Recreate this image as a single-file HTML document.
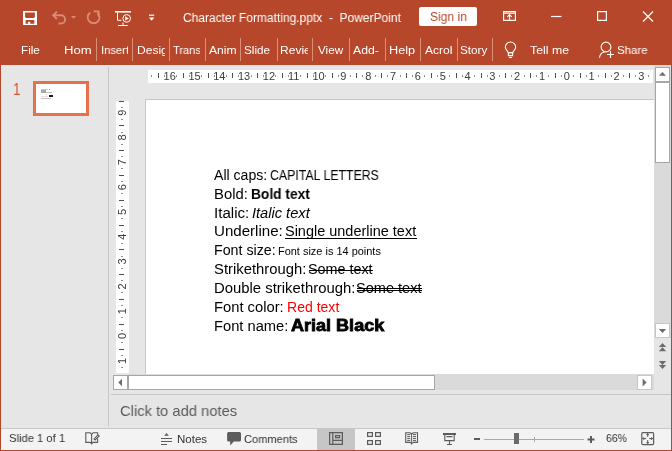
<!DOCTYPE html>
<html><head><meta charset="utf-8">
<style>
*{margin:0;padding:0;box-sizing:border-box}
html,body{width:672px;height:451px;overflow:hidden}
body{background:#b7472a;position:relative;font-family:"Liberation Sans",sans-serif}
.a{position:absolute}
.st{position:absolute;white-space:nowrap;line-height:1;transform-origin:0 0;will-change:transform}
.t{position:absolute;white-space:nowrap;line-height:1;transform-origin:0 0;will-change:transform}
svg{position:absolute;overflow:visible}
.clip{position:absolute;top:0;height:65px;overflow:hidden}
.sep{position:absolute;top:38px;width:1px;height:23px;background:#d98e79}
</style></head><body>

<!-- title bar -->
<svg style="left:0;top:0" width="672" height="35">
  <!-- save -->
  <path fill="#fff" fill-rule="evenodd" d="M23 11H37V25H23ZM25.1 12.4H34.9V17.1L33.9 18.1H26.1L25.1 17.1ZM25.6 20.1H34.4V23.7H30.2V21.7H28.1V23.7H25.6Z"/>
  <!-- undo (faded) -->
  <g fill="none" stroke="#d98b76" stroke-width="1.9">
    <path d="M53.2 15.3H61A4.1 4.1 0 0 1 61 23.5H58.5"/>
    <path d="M56.9 11.6L53.2 15.3L56.9 19"/>
    <path d="M90.2 12.6A5.9 5.9 0 1 0 97.4 12.9"/>
    <path d="M93.6 11.4H98.6V16.2"/>
  </g>
  <path d="M71 16H76.3L73.65 18.8Z" fill="#d98b76"/>
  <!-- present -->
  <g fill="none" stroke="#fff" stroke-width="1">
    <path d="M115 11.8H131" stroke-width="1.6"/>
    <path d="M117.5 12.5V20.3H121.5"/>
    <circle cx="126.7" cy="18.4" r="3.8"/>
    <path d="M118 25.5H127.8M123 22.5V25.5"/>
  </g>
  <path d="M125.2 16.2V20.6L128.9 18.4Z" fill="#fff"/>
  <!-- customize -->
  <rect x="149" y="14.6" width="5.2" height="1.2" fill="#fff"/>
  <path d="M149 17.5H154.3L151.65 20.8Z" fill="#fff"/>
  <!-- ribbon display options -->
  <g fill="none" stroke="#fff" stroke-width="1.2">
    <path d="M503.6 11.6H515.4V20.4H503.6Z"/>
    <path d="M504 13.2H515"/>
    <path d="M509.5 14.5V20.4M507.3 16.8L509.5 14.6L511.7 16.8"/>
    <!-- minimize -->
    <path d="M551 16.5H561.5"/>
    <!-- maximize -->
    <path d="M597.6 11.6H606.4V20.4H597.6Z"/>
    <!-- close -->
    <path d="M643 11.5L653 21.5M653 11.5L643 21.5"/>
  </g>
</svg>
<div class="t" style="left:183.1px;top:12.4px;font-size:12.5px;transform:scaleX(0.959);color:#fff">Character Formatting.pptx&nbsp; -&nbsp; PowerPoint</div>
<div class="a" style="left:419px;top:7px;width:58px;height:19px;background:#fff;border-radius:2px"></div>
<div class="t" style="left:429.6px;top:11.1px;font-size:12.5px;transform:scaleX(0.966);color:#b7472a">Sign in</div>

<!-- ribbon tabs -->
<div class="t" style="left:20.60px;top:43.85px;font-size:11.7px;transform:scaleX(1.0);color:#fff">File</div>
<div class="clip" style="left:64px;width:28px"><div class="t" style="left:0.40px;top:43.85px;font-size:11.7px;transform:scaleX(1.12);color:#fff">Home</div></div>
<div class="sep" style="left:96px"></div>
<div class="clip" style="left:101px;width:27px"><div class="t" style="left:0.10px;top:43.85px;font-size:11.7px;transform:scaleX(0.96);color:#fff">Insert</div></div>
<div class="sep" style="left:132px"></div>
<div class="clip" style="left:136px;width:29px"><div class="t" style="left:0.60px;top:43.85px;font-size:11.7px;transform:scaleX(1.03);color:#fff">Design</div></div>
<div class="sep" style="left:169px"></div>
<div class="clip" style="left:172px;width:28px"><div class="t" style="left:0.80px;top:43.85px;font-size:11.7px;transform:scaleX(0.95);color:#fff">Transitions</div></div>
<div class="sep" style="left:205px"></div>
<div class="clip" style="left:208px;width:28px"><div class="t" style="left:1.00px;top:43.85px;font-size:11.7px;transform:scaleX(1.04);color:#fff">Animations</div></div>
<div class="sep" style="left:240px"></div>
<div class="clip" style="left:244px;width:28px"><div class="t" style="left:0.00px;top:43.85px;font-size:11.7px;transform:scaleX(1.0);color:#fff">Slide Show</div></div>
<div class="sep" style="left:277px"></div>
<div class="clip" style="left:280px;width:28px"><div class="t" style="left:0.40px;top:43.85px;font-size:11.7px;transform:scaleX(1.03);color:#fff">Review</div></div>
<div class="sep" style="left:312px"></div>
<div class="clip" style="left:316px;width:28px"><div class="t" style="left:1.50px;top:43.85px;font-size:11.7px;transform:scaleX(1.0);color:#fff">View</div></div>
<div class="sep" style="left:349px"></div>
<div class="clip" style="left:352px;width:27px"><div class="t" style="left:1.20px;top:43.85px;font-size:11.7px;transform:scaleX(1.047);color:#fff">Add-ins</div></div>
<div class="sep" style="left:385px"></div>
<div class="clip" style="left:389px;width:27px"><div class="t" style="left:0.00px;top:43.85px;font-size:11.7px;transform:scaleX(1.09);color:#fff">Help</div></div>
<div class="sep" style="left:420px"></div>
<div class="clip" style="left:424px;width:28px"><div class="t" style="left:1.20px;top:43.85px;font-size:11.7px;transform:scaleX(1.03);color:#fff">Acrobat</div></div>
<div class="sep" style="left:457px"></div>
<div class="clip" style="left:460px;width:28px"><div class="t" style="left:0.00px;top:43.85px;font-size:11.7px;transform:scaleX(0.99);color:#fff">Storyline</div></div>
<div class="sep" style="left:492px"></div>
<div class="t" style="left:530.24px;top:44.10px;font-size:11.7px;transform:scaleX(1.054);color:#fff">Tell me</div>
<div class="t" style="left:616.91px;top:44.10px;font-size:11.7px;transform:scaleX(0.98);color:#fff">Share</div>
<svg style="left:0;top:35px" width="672" height="30">
  <g fill="none" stroke="#fff" stroke-width="1.1">
    <path d="M508.3 17.8C508 16.2 505.3 14.4 505.3 12.2A5.2 5.2 0 0 1 515.7 12.2C515.7 14.4 513 16.2 512.7 17.8Z"/>
    <path d="M508.4 17.8H512.6V20.6H508.4Z"/>
    <path d="M509 22.5H512"/>
    <circle cx="606" cy="12" r="4.9"/>
    <path d="M599.5 22.8C599.8 19.5 601.8 17.5 604.5 17"/>
    <path d="M607 19.5H614M610.5 16V23"/>
  </g>
</svg>

<!-- main area -->
<div class="a" style="left:1px;top:65px;width:670px;height:363px;background:#e6e6e6"></div>
<div class="a" style="left:108px;top:67px;width:1px;height:359px;background:#c6c6c6"></div>

<!-- thumbnail -->
<div class="t" style="left:13.2px;top:81.6px;font-size:16px;transform:scaleX(0.84);color:#cf5534">1</div>
<div class="a" style="left:33px;top:81px;width:56px;height:35px;border:3px solid #e9704c;background:#fff"></div>

<!-- rulers -->
<div class="a" style="left:148px;top:70px;width:505px;height:13px;background:#fff"></div>
<div class="a" style="left:116px;top:101px;width:13px;height:272px;background:#fff"></div>

<!-- ruler marks -->
<svg style="left:0;top:0;will-change:transform" width="672" height="451" shape-rendering="crispEdges">
<g font-family="Liberation Sans" font-size="11px" fill="#3c3c3c" shape-rendering="auto"><text x="169.68" y="79.8" text-anchor="middle">16</text><text x="194.50" y="79.8" text-anchor="middle">15</text><text x="219.32" y="79.8" text-anchor="middle">14</text><text x="244.14" y="79.8" text-anchor="middle">13</text><text x="268.96" y="79.8" text-anchor="middle">12</text><text x="293.78" y="79.8" text-anchor="middle">11</text><text x="318.60" y="79.8" text-anchor="middle">10</text><text x="343.42" y="79.8" text-anchor="middle">9</text><text x="368.24" y="79.8" text-anchor="middle">8</text><text x="393.06" y="79.8" text-anchor="middle">7</text><text x="417.88" y="79.8" text-anchor="middle">6</text><text x="442.70" y="79.8" text-anchor="middle">5</text><text x="467.52" y="79.8" text-anchor="middle">4</text><text x="492.34" y="79.8" text-anchor="middle">3</text><text x="517.16" y="79.8" text-anchor="middle">2</text><text x="541.98" y="79.8" text-anchor="middle">1</text><text x="566.80" y="79.8" text-anchor="middle">0</text><text x="591.62" y="79.8" text-anchor="middle">1</text><text x="616.44" y="79.8" text-anchor="middle">2</text><text x="641.26" y="79.8" text-anchor="middle">3</text></g>
<rect x="151" y="75" width="1" height="2" fill="#909090"/><rect x="158" y="73" width="1" height="5" fill="#505050"/><rect x="164" y="75" width="1" height="2" fill="#909090"/><rect x="176" y="75" width="1" height="2" fill="#909090"/><rect x="183" y="73" width="1" height="5" fill="#505050"/><rect x="189" y="75" width="1" height="2" fill="#909090"/><rect x="201" y="75" width="1" height="2" fill="#909090"/><rect x="208" y="73" width="1" height="5" fill="#505050"/><rect x="214" y="75" width="1" height="2" fill="#909090"/><rect x="226" y="75" width="1" height="2" fill="#909090"/><rect x="232" y="73" width="1" height="5" fill="#505050"/><rect x="238" y="75" width="1" height="2" fill="#909090"/><rect x="251" y="75" width="1" height="2" fill="#909090"/><rect x="257" y="73" width="1" height="5" fill="#505050"/><rect x="263" y="75" width="1" height="2" fill="#909090"/><rect x="275" y="75" width="1" height="2" fill="#909090"/><rect x="282" y="73" width="1" height="5" fill="#505050"/><rect x="288" y="75" width="1" height="2" fill="#909090"/><rect x="300" y="75" width="1" height="2" fill="#909090"/><rect x="307" y="73" width="1" height="5" fill="#505050"/><rect x="313" y="75" width="1" height="2" fill="#909090"/><rect x="325" y="75" width="1" height="2" fill="#909090"/><rect x="332" y="73" width="1" height="5" fill="#505050"/><rect x="338" y="75" width="1" height="2" fill="#909090"/><rect x="350" y="75" width="1" height="2" fill="#909090"/><rect x="356" y="73" width="1" height="5" fill="#505050"/><rect x="362" y="75" width="1" height="2" fill="#909090"/><rect x="375" y="75" width="1" height="2" fill="#909090"/><rect x="381" y="73" width="1" height="5" fill="#505050"/><rect x="387" y="75" width="1" height="2" fill="#909090"/><rect x="400" y="75" width="1" height="2" fill="#909090"/><rect x="406" y="73" width="1" height="5" fill="#505050"/><rect x="412" y="75" width="1" height="2" fill="#909090"/><rect x="424" y="75" width="1" height="2" fill="#909090"/><rect x="431" y="73" width="1" height="5" fill="#505050"/><rect x="437" y="75" width="1" height="2" fill="#909090"/><rect x="449" y="75" width="1" height="2" fill="#909090"/><rect x="456" y="73" width="1" height="5" fill="#505050"/><rect x="462" y="75" width="1" height="2" fill="#909090"/><rect x="474" y="75" width="1" height="2" fill="#909090"/><rect x="481" y="73" width="1" height="5" fill="#505050"/><rect x="487" y="75" width="1" height="2" fill="#909090"/><rect x="499" y="75" width="1" height="2" fill="#909090"/><rect x="505" y="73" width="1" height="5" fill="#505050"/><rect x="511" y="75" width="1" height="2" fill="#909090"/><rect x="524" y="75" width="1" height="2" fill="#909090"/><rect x="530" y="73" width="1" height="5" fill="#505050"/><rect x="536" y="75" width="1" height="2" fill="#909090"/><rect x="548" y="75" width="1" height="2" fill="#909090"/><rect x="555" y="73" width="1" height="5" fill="#505050"/><rect x="561" y="75" width="1" height="2" fill="#909090"/><rect x="573" y="75" width="1" height="2" fill="#909090"/><rect x="580" y="73" width="1" height="5" fill="#505050"/><rect x="586" y="75" width="1" height="2" fill="#909090"/><rect x="598" y="75" width="1" height="2" fill="#909090"/><rect x="605" y="73" width="1" height="5" fill="#505050"/><rect x="611" y="75" width="1" height="2" fill="#909090"/><rect x="623" y="75" width="1" height="2" fill="#909090"/><rect x="629" y="73" width="1" height="5" fill="#505050"/><rect x="635" y="75" width="1" height="2" fill="#909090"/><rect x="648" y="75" width="1" height="2" fill="#909090"/>
<g font-family="Liberation Sans" font-size="11px" fill="#3c3c3c" shape-rendering="auto"><text transform="translate(126,112.62) rotate(-90)" x="0" y="0" text-anchor="middle">9</text><text transform="translate(126,137.44) rotate(-90)" x="0" y="0" text-anchor="middle">8</text><text transform="translate(126,162.26) rotate(-90)" x="0" y="0" text-anchor="middle">7</text><text transform="translate(126,187.08) rotate(-90)" x="0" y="0" text-anchor="middle">6</text><text transform="translate(126,211.90) rotate(-90)" x="0" y="0" text-anchor="middle">5</text><text transform="translate(126,236.72) rotate(-90)" x="0" y="0" text-anchor="middle">4</text><text transform="translate(126,261.54) rotate(-90)" x="0" y="0" text-anchor="middle">3</text><text transform="translate(126,286.36) rotate(-90)" x="0" y="0" text-anchor="middle">2</text><text transform="translate(126,311.18) rotate(-90)" x="0" y="0" text-anchor="middle">1</text><text transform="translate(126,336.00) rotate(-90)" x="0" y="0" text-anchor="middle">0</text><text transform="translate(126,360.82) rotate(-90)" x="0" y="0" text-anchor="middle">1</text></g>
<rect x="119" y="101" width="5" height="1" fill="#505050"/><rect x="121" y="101" width="2" height="1" fill="#909090"/><rect x="121" y="101" width="2" height="1" fill="#909090"/><rect x="119" y="101" width="5" height="1" fill="#505050"/><rect x="121" y="107" width="2" height="1" fill="#909090"/><rect x="121" y="119" width="2" height="1" fill="#909090"/><rect x="119" y="125" width="5" height="1" fill="#505050"/><rect x="121" y="132" width="2" height="1" fill="#909090"/><rect x="121" y="144" width="2" height="1" fill="#909090"/><rect x="119" y="150" width="5" height="1" fill="#505050"/><rect x="121" y="156" width="2" height="1" fill="#909090"/><rect x="121" y="168" width="2" height="1" fill="#909090"/><rect x="119" y="175" width="5" height="1" fill="#505050"/><rect x="121" y="181" width="2" height="1" fill="#909090"/><rect x="121" y="193" width="2" height="1" fill="#909090"/><rect x="119" y="200" width="5" height="1" fill="#505050"/><rect x="121" y="206" width="2" height="1" fill="#909090"/><rect x="121" y="218" width="2" height="1" fill="#909090"/><rect x="119" y="225" width="5" height="1" fill="#505050"/><rect x="121" y="231" width="2" height="1" fill="#909090"/><rect x="121" y="243" width="2" height="1" fill="#909090"/><rect x="119" y="249" width="5" height="1" fill="#505050"/><rect x="121" y="256" width="2" height="1" fill="#909090"/><rect x="121" y="268" width="2" height="1" fill="#909090"/><rect x="119" y="274" width="5" height="1" fill="#505050"/><rect x="121" y="280" width="2" height="1" fill="#909090"/><rect x="121" y="292" width="2" height="1" fill="#909090"/><rect x="119" y="299" width="5" height="1" fill="#505050"/><rect x="121" y="305" width="2" height="1" fill="#909090"/><rect x="121" y="317" width="2" height="1" fill="#909090"/><rect x="119" y="324" width="5" height="1" fill="#505050"/><rect x="121" y="330" width="2" height="1" fill="#909090"/><rect x="121" y="342" width="2" height="1" fill="#909090"/><rect x="119" y="349" width="5" height="1" fill="#505050"/><rect x="121" y="355" width="2" height="1" fill="#909090"/><rect x="121" y="367" width="2" height="1" fill="#909090"/>
</svg>
<!-- slide -->
<div class="a" style="left:145px;top:99px;width:509px;height:275px;background:#fff;border-left:1px solid #c6c6c6;border-top:1px solid #c6c6c6"></div>

<!-- slide text -->
<div class="st" style="left:214.30px;top:167.85px;transform:scaleX(1.006);font-size:14.0px;color:#000">All caps:</div>
<div class="st" style="left:270.12px;top:167.85px;transform:scaleX(0.880);font-size:14.0px;color:#000">CAPITAL LETTERS</div>
<div class="st" style="left:213.55px;top:186.75px;transform:scaleX(1.06);font-size:14.0px;color:#000">Bold:</div>
<div class="st" style="left:250.62px;top:186.75px;transform:scaleX(0.9821);font-size:14.0px;font-weight:bold;color:#000">Bold text</div>
<div class="st" style="left:213.53px;top:205.75px;transform:scaleX(1.079);font-size:14.0px;color:#000">Italic:</div>
<div class="st" style="left:252.48px;top:205.75px;transform:scaleX(1.0443);font-size:14.0px;font-style:italic;color:#000">Italic text</div>
<div class="st" style="left:213.55px;top:224.35px;transform:scaleX(1.078);font-size:14.0px;color:#000">Underline:</div>
<div class="st" style="left:284.92px;top:224.35px;transform:scaleX(1.0341);font-size:14.0px;color:#000">Single underline text</div>
<div class="st" style="left:213.63px;top:242.95px;transform:scaleX(1.0163);font-size:14.0px;color:#000">Font size:</div>
<div class="st" style="left:277.74px;top:245.57px;transform:scaleX(1.0054);font-size:10.9px;color:#000">Font size is 14 points</div>
<div class="st" style="left:213.58px;top:262.05px;transform:scaleX(1.0588);font-size:14.0px;color:#000">Strikethrough:</div>
<div class="st" style="left:308.33px;top:262.05px;transform:scaleX(1.0249);font-size:14.0px;color:#000">Some text</div>
<div class="st" style="left:213.57px;top:280.85px;transform:scaleX(1.0621);font-size:14.0px;color:#000">Double strikethrough:</div>
<div class="st" style="left:356.22px;top:280.85px;transform:scaleX(1.0394);font-size:14.0px;color:#000">Some text</div>
<div class="st" style="left:213.58px;top:299.75px;transform:scaleX(1.0535);font-size:14.0px;color:#000">Font color:</div>
<div class="st" style="left:287.0px;top:299.75px;transform:scaleX(1.0030);font-size:14.0px;color:#f00">Red text</div>
<div class="st" style="left:213.59px;top:318.55px;transform:scaleX(1.0505);font-size:14.0px;color:#000">Font name:</div>
<div class="st" style="left:291.30px;top:318.0px;transform:scaleX(1.1415);font-size:15.8px;font-weight:bold;-webkit-text-stroke:0.8px #000;color:#000">Arial Black</div>
<div class="a" style="left:285px;top:238px;width:132px;height:1px;background:#000"></div>
<div class="a" style="left:309px;top:270px;width:64px;height:1px;background:#000"></div>
<div class="a" style="left:357px;top:288px;width:65px;height:1px;background:#000"></div>
<div class="a" style="left:357px;top:290px;width:65px;height:1px;background:#000"></div>

<!-- v scrollbar -->
<div class="a" style="left:654px;top:65px;width:17px;height:273px;background:#dadada"></div>
<div class="a" style="left:655px;top:67px;width:15px;height:15px;background:#fff;border:1px solid #a6a6a6"></div>
<div class="a" style="left:655px;top:82px;width:15px;height:81px;background:#fff;border:1px solid #a6a6a6"></div>
<div class="a" style="left:655px;top:323px;width:15px;height:15px;background:#fff;border:1px solid #c6c6c6"></div>
<svg style="left:0;top:0" width="672" height="451">
  <path d="M659 75.7H666L662.5 71.9Z" fill="#6d6d6d"/>
  <path d="M658.8 329H666.2L662.5 333Z" fill="#6d6d6d"/>
  <path d="M658.8 347H666.2L662.5 343Z M658.8 351.2H666.2L662.5 347.2Z" fill="#6d6d6d"/>
  <path d="M658.8 361H666.2L662.5 365Z M658.8 365H666.2L662.5 369Z" fill="#6d6d6d"/>
</svg>

<!-- h scrollbar -->
<div class="a" style="left:128px;top:374px;width:526px;height:16px;background:#dadada"></div>
<div class="a" style="left:113px;top:375px;width:15px;height:15px;background:#fff;border:1px solid #a6a6a6"></div>
<div class="a" style="left:128px;top:375px;width:307px;height:15px;background:#fff;border:1px solid #a6a6a6"></div>
<div class="a" style="left:637px;top:375px;width:15px;height:15px;background:#fff;border:1px solid #c6c6c6"></div>
<svg style="left:0;top:0" width="672" height="451">
  <path d="M122 378.7V386.3L118.3 382.5Z" fill="#6d6d6d"/>
  <path d="M642.6 378.5V386.5L646.6 382.5Z" fill="#6d6d6d"/>
</svg>
<div class="a" style="left:111px;top:394px;width:560px;height:1px;background:#c6c6c6"></div>

<!-- notes -->
<div class="t" style="left:120.06px;top:403.10px;font-size:15px;transform:scaleX(0.982);color:#5a5a5a">Click to add notes</div>

<!-- status bar -->
<div class="a" style="left:1px;top:428px;width:670px;height:1px;background:#c6c6c6"></div>
<div class="a" style="left:1px;top:429px;width:670px;height:21px;background:#f3f3f3"></div>
<div class="t" style="left:9.01px;top:433.1px;font-size:11.5px;transform:scaleX(0.975);color:#333">Slide 1 of 1</div>
<div class="t" style="left:176.70px;top:433.6px;font-size:11.5px;transform:scaleX(1.0);color:#333">Notes</div>
<div class="t" style="left:244.32px;top:433.6px;font-size:11.5px;transform:scaleX(0.964);color:#333">Comments</div>
<div class="a" style="left:317px;top:429px;width:38px;height:21px;background:#c6c6c6"></div>
<div class="t" style="left:605.64px;top:433.4px;font-size:11.5px;transform:scaleX(0.91);color:#333">66%</div>

<!-- status icons -->
<svg style="left:0;top:0" width="672" height="451">
<g fill="none" stroke="#5c5c5c" stroke-width="1.1">
  <path d="M91.6 434.3L90.2 432.8H85.8V442.4H90.2L91.6 443.8L93 442.4H97.6V438.6"/>
  <path d="M91.6 434.3L93 432.8H97.6V434.6M91.6 434.3V444.3"/>
  <path d="M94.2 439.8L99 435" stroke-width="2.6"/><path d="M95 439L98.2 435.8" stroke="#e8e8e8" stroke-width="0.7"/>
  <path d="M161 438.5H172M161 441.5H172M161 444.5H167"/>
  <path d="M329.6 432.6H342.4V444.4H329.6ZM332.8 432.6V444.4M332.8 440.4H342.4M335.6 435.6H339.6V437.6H335.6Z" stroke-width="1.2"/>
  <path d="M367.6 432.6H372.4V436.4H367.6ZM375.6 432.6H380.4V436.4H375.6ZM367.6 440.6H372.4V444.4H367.6ZM375.6 440.6H380.4V444.4H375.6Z" stroke-width="1.2"/>
  <path d="M411.6 434L410 432.8H405.7V442.4H410L411.6 443.6L413.2 442.4H417.5V432.8H413.2Z" stroke-width="1.1"/>
  <path d="M411.6 434V444.6M407.2 434.6H410.2M407.2 436.6H410.2M407.2 438.6H410.2M407.2 440.6H410.2M413 434.6H416M413 436.6H416M413 438.6H416M413 440.6H416" stroke-width="1"/>
  <path d="M444.8 434.5V440.6H454.2V434.5M446.5 436.6H452.5M449.5 440.6V444.4M447 444.5H452" stroke-width="1.1"/>
  <path d="M641.8 433.6Q641.8 432.6 642.8 432.6H652.6Q653.6 432.6 653.6 433.6V443.6Q653.6 444.6 652.6 444.6H642.8Q641.8 444.6 641.8 443.6Z" stroke-width="1.2"/>
  <path d="M647.7 433V437M646.4 434.6H649M647.7 440V444.2M646.4 442.6H649M642.2 438.6H646.2M643.8 437.3V439.9M649.2 438.6H653.2M651.6 437.3V439.9" stroke-width="1"/>
</g>
<path d="M164.2 435.8H168.9L166.55 433.1Z" fill="#5c5c5c"/>
<path d="M228.6 432H239.5Q241 432 241 433.5V440.1Q241 441.6 239.5 441.6H233.8L230.2 445.6V441.6H228.6Q227.1 441.6 227.1 440.1V433.5Q227.1 432 228.6 432Z" fill="#5c5c5c"/>
<rect x="443" y="433" width="13" height="2" fill="#5c5c5c"/>
<rect x="474" y="438" width="6" height="2" fill="#5c5c5c"/>
<rect x="484" y="439" width="100" height="1" fill="#a8a8a8"/>
<rect x="534" y="437" width="1" height="5" fill="#a8a8a8"/>
<rect x="514" y="433" width="5" height="11" fill="#6a6a6a"/>
<rect x="587.5" y="438.5" width="7" height="2" fill="#5c5c5c"/>
<rect x="590" y="436" width="2" height="7" fill="#5c5c5c"/>
</svg>
<!-- thumb content -->
<div class="a" style="left:41px;top:89px;width:7px;height:1px;background:#c8c8c8"></div>
<div class="a" style="left:49px;top:89px;width:1px;height:1px;background:#8a8a8a"></div>
<div class="a" style="left:41px;top:90px;width:5px;height:3px;background:#a8a8a8"></div>
<div class="a" style="left:46px;top:92px;width:6px;height:1px;background:#bdbdbd"></div>
<div class="a" style="left:46px;top:94px;width:1px;height:1px;background:#d0d0d0"></div>
<div class="a" style="left:41px;top:96px;width:7px;height:1px;background:#f3d8d8"></div>
<div class="a" style="left:49px;top:95px;width:4px;height:2px;background:#1a1a1a"></div>
<div class="a" style="left:41px;top:98px;width:10px;height:1px;background:#c4c4c4"></div>
</body></html>
